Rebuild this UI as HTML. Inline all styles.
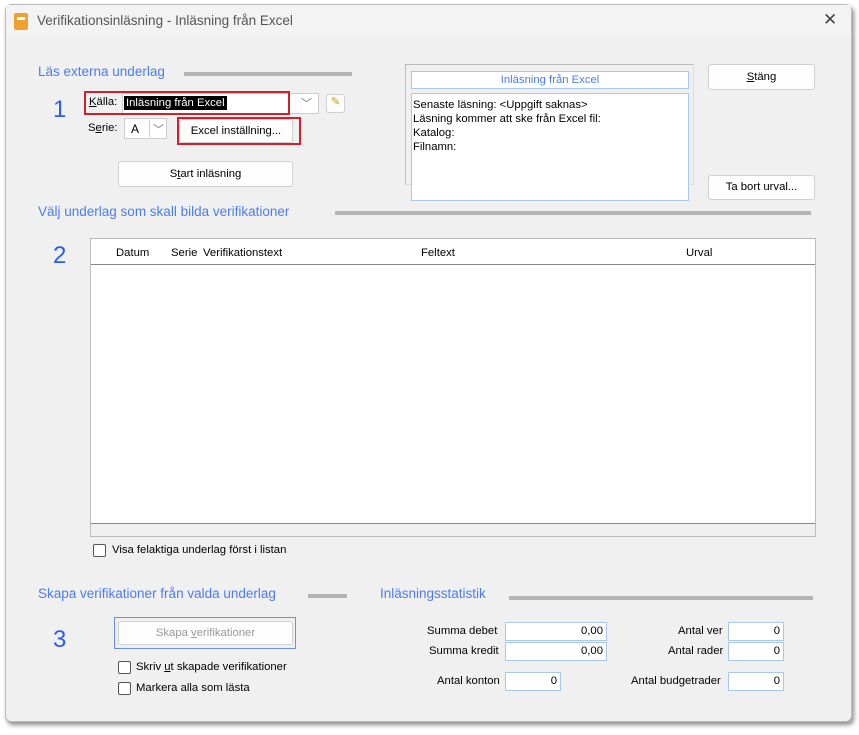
<!DOCTYPE html>
<html><head><meta charset="utf-8"><style>
*{box-sizing:border-box;margin:0;padding:0}
body{width:859px;height:735px;background:#fff;position:relative;overflow:hidden;font-family:"Liberation Sans",sans-serif;font-size:11.3px;color:#000}
.a{position:absolute}
.win{left:5px;top:4px;width:847px;height:718px;background:#f0f0f0;border:1px solid #bbb;box-shadow:2px 3px 5px rgba(0,0,0,.45);border-radius:6px}
.title{left:6px;top:5px;width:845px;height:33px;background:#f3f3f3}
.blue{color:#4a7cf0;font-size:13.5px}
.bar{height:4px;background:#b4b4b4}
.btn{background:#fdfdfd;border:1px solid #d0d0d0;border-radius:3px;text-align:center}
.num{color:#2c5cf0;font-size:24px}
.in{background:#fff;border:1px solid #a8c8f0}
.cb{width:13px;height:13px;border:1px solid #555;border-radius:2px;background:#fff}
.r{text-align:right;padding-right:3px}
</style></head><body>
<div class="a win"></div>
<div class="a title"></div>
<div class="a" style="left:14px;top:13px;width:14px;height:17px;background:#f0a030;border-radius:2px"></div>
<div class="a" style="left:17px;top:17px;width:8px;height:3px;background:#fff"></div>
<div class="a" style="left:37px;top:13px;font-size:13.5px;color:#555">Verifikationsinläsning - Inläsning från Excel</div>
<div class="a" style="left:823px;top:10px;font-size:17px;color:#444">✕</div>

<div class="a blue" style="left:38px;top:64px">Läs externa underlag</div>
<div class="a bar" style="left:184px;top:72px;width:168px"></div>
<div class="a num" style="left:53px;top:96px">1</div>
<div class="a" style="left:89px;top:96px"><u>K</u>älla:</div>
<div class="a" style="left:122px;top:93px;width:197px;height:21px;background:#fff;border:1px solid #ccc"></div>
<div class="a" style="left:124px;top:96px;background:#000;color:#fff;padding:0 2px;line-height:14px">Inläsning från Excel</div>
<div class="a" style="left:301px;top:95px;color:#777;font-size:11px">﹀</div>
<div class="a" style="left:84px;top:91px;width:206px;height:24px;border:2px solid #d0202e"></div>
<div class="a btn" style="left:326px;top:94px;width:19px;height:19px;color:#c90;font-size:11px">✎</div>
<div class="a" style="left:88px;top:122px">S<u>e</u>rie:</div>
<div class="a" style="left:124px;top:118px;width:43px;height:21px;background:#fff;border:1px solid #ccc"></div>
<div class="a" style="left:131px;top:122px;font-size:12px">A</div>
<div class="a" style="left:149px;top:120px;width:1px;height:17px;background:#ccc"></div>
<div class="a" style="left:153px;top:121px;color:#777;font-size:11px">﹀</div>
<div class="a btn" style="left:179px;top:119px;width:114px;height:24px;line-height:22px">Excel inställning...</div>
<div class="a" style="left:177px;top:117px;width:124px;height:28px;border:2px solid #d0202e"></div>
<div class="a btn" style="left:118px;top:161px;width:175px;height:26px;line-height:24px">S<u>t</u>art inläsning</div>

<div class="a" style="left:405px;top:64px;width:289px;height:121px;border:1px solid #bbb;border-right-color:#ddd;border-bottom-color:#ddd"></div>
<div class="a in" style="left:411px;top:71px;width:278px;height:18px;text-align:center;color:#4a7cf0;line-height:16px">Inläsning från Excel</div>
<div class="a in" style="left:411px;top:93px;width:278px;height:108px;padding:4px 1px;line-height:14px">Senaste läsning: &lt;Uppgift saknas&gt;<br>Läsning kommer att ske från Excel fil:<br>Katalog:<br>Filnamn:</div>
<div class="a btn" style="left:708px;top:64px;width:107px;height:26px;line-height:24px"><u>S</u>täng</div>
<div class="a btn" style="left:708px;top:175px;width:107px;height:25px;line-height:23px">Ta bort urval...</div>

<div class="a blue" style="left:38px;top:204px">Välj underlag som skall bilda verifikationer</div>
<div class="a bar" style="left:335px;top:211px;width:476px"></div>
<div class="a num" style="left:53px;top:242px">2</div>
<div class="a" style="left:90px;top:238px;width:726px;height:299px;background:#fff;border:1px solid #bbb"></div>
<div class="a" style="left:91px;top:239px;width:724px;height:26px;border-bottom:1px solid #888;background:#fff"></div>
<div class="a" style="left:116px;top:247px">Datum</div>
<div class="a" style="left:171px;top:247px">Serie</div>
<div class="a" style="left:203px;top:247px">Verifikationstext</div>
<div class="a" style="left:421px;top:247px">Feltext</div>
<div class="a" style="left:686px;top:247px">Urval</div>
<div class="a" style="left:91px;top:523px;width:724px;height:13px;background:#f0f0f0;border-top:1px solid #888"></div>
<div class="a cb" style="left:93px;top:544px"></div>
<div class="a" style="left:112px;top:544px">Visa felaktiga underlag först i listan</div>

<div class="a blue" style="left:38px;top:586px">Skapa verifikationer från valda underlag</div>
<div class="a bar" style="left:308px;top:594px;width:39px"></div>
<div class="a blue" style="left:380px;top:586px">Inläsningsstatistik</div>
<div class="a bar" style="left:509px;top:596px;width:304px"></div>
<div class="a num" style="left:53px;top:626px">3</div>
<div class="a" style="left:114px;top:617px;width:182px;height:32px;border:1px solid #6a8ee8"></div>
<div class="a btn" style="left:118px;top:621px;width:175px;height:24px;line-height:22px;color:#999">Skapa <u>v</u>erifikationer</div>
<div class="a cb" style="left:118px;top:661px"></div>
<div class="a" style="left:136px;top:661px">Skriv <u>u</u>t skapade verifikationer</div>
<div class="a cb" style="left:118px;top:682px"></div>
<div class="a" style="left:136px;top:682px">Markera alla som lästa</div>

<div class="a" style="left:427px;top:625px">Summa debet</div>
<div class="a in r" style="left:505px;top:622px;width:102px;height:19px;line-height:17px">0,00</div>
<div class="a" style="left:429px;top:645px">Summa kredit</div>
<div class="a in r" style="left:505px;top:642px;width:102px;height:19px;line-height:17px">0,00</div>
<div class="a" style="left:437px;top:675px">Antal konton</div>
<div class="a in r" style="left:505px;top:672px;width:56px;height:19px;line-height:17px">0</div>
<div class="a" style="left:678px;top:625px">Antal ver</div>
<div class="a in r" style="left:728px;top:622px;width:56px;height:19px;line-height:17px">0</div>
<div class="a" style="left:668px;top:645px">Antal rader</div>
<div class="a in r" style="left:728px;top:642px;width:56px;height:19px;line-height:17px">0</div>
<div class="a" style="left:631px;top:675px">Antal budgetrader</div>
<div class="a in r" style="left:728px;top:672px;width:56px;height:19px;line-height:17px">0</div>
</body></html>
